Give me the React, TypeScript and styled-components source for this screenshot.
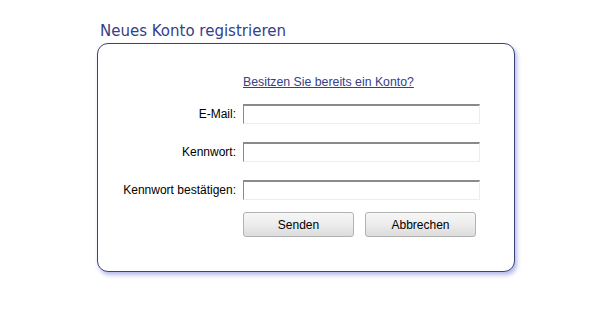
import styled, { createGlobalStyle } from "styled-components";

const GlobalStyle = createGlobalStyle`
  body {
    margin: 0;
    background: #fff;
    font-family: "Liberation Sans", Arial, sans-serif;
  }
`;

const App = () => {
  return (
    <Page>
      <GlobalStyle />
      <Title>Neues Konto registrieren</Title>
      <Card>
        <Form>
          <span />
          <LinkRow>
            <a href="#">Besitzen Sie bereits ein Konto?</a>
          </LinkRow>
          <Label>E-Mail:</Label>
          <Input type="text" />
          <Label>Kennwort:</Label>
          <Input type="password" />
          <Label>Kennwort bestätigen:</Label>
          <Input type="password" />
          <span />
          <Buttons>
            <Button>Senden</Button>
            <Button>Abbrechen</Button>
          </Buttons>
        </Form>
      </Card>
    </Page>
  );
};

export default App;

const Page = styled.div`
  width: 616px;
  height: 318px;
  padding: 21px 0 0 97px;
  box-sizing: border-box;
`;
const Title = styled.h1`
  margin: 0 0 2px 3px;
  font-family: "DejaVu Sans", Tahoma, sans-serif;
  font-size: 15px;
  font-weight: normal;
  line-height: 20px;
  color: #33418a;
`;
const Card = styled.div`
  width: 418px;
  height: 229px;
  box-sizing: border-box;
  border: 1px solid #3a4477;
  border-radius: 11px;
  box-shadow: 2px 3px 4px rgba(70, 80, 200, 0.4);
  background: #fff;
  padding-top: 31px;
`;
const Form = styled.div`
  display: grid;
  grid-template-columns: 138px 237px;
  column-gap: 7px;
  row-gap: 18px;
  align-items: center;
`;
const LinkRow = styled.div`
  font-size: 12.3px;
  line-height: 14px;
  margin-bottom: -3px;

  a {
    color: #33418a;
    text-decoration: underline;
  }
`;
const Label = styled.label`
  text-align: right;
  font-size: 12px;
  color: #000;
`;
const Input = styled.input`
  box-sizing: border-box;
  width: 237px;
  height: 20px;
  margin: 0;
  padding: 0 3px;
  border: 1px solid #ededed;
  border-top: 2px solid #8a8a8a;
  border-left: 1px solid #8a8a8a;
  background: #fff;
  outline: none;
`;
const Buttons = styled.div`
  display: flex;
  gap: 11px;
  margin-top: -6px;
`;
const Button = styled.button`
  width: 111px;
  height: 25px;
  box-sizing: border-box;
  border: 1px solid #b2b2b2;
  border-radius: 3px;
  background: linear-gradient(#f7f7f7 0%, #ececec 50%, #dcdcdc 100%);
  font-family: "Liberation Sans", Arial, sans-serif;
  font-size: 12px;
  color: #000;
  padding: 0;
`;
